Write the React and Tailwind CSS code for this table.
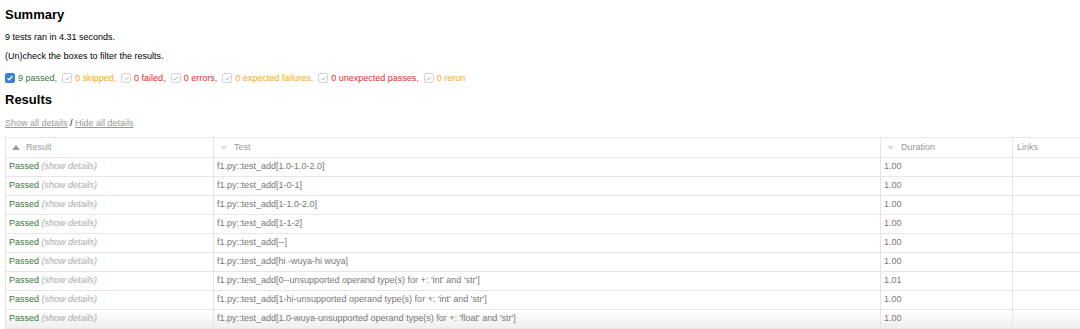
import React from "react";

const rows = [
  ["f1.py::test_add[1.0-1.0-2.0]", "1.00"],
  ["f1.py::test_add[1-0-1]", "1.00"],
  ["f1.py::test_add[1-1.0-2.0]", "1.00"],
  ["f1.py::test_add[1-1-2]", "1.00"],
  ["f1.py::test_add[--]", "1.00"],
  ["f1.py::test_add[hi -wuya-hi wuya]", "1.00"],
  ["f1.py::test_add[0--unsupported operand type(s) for +: 'int' and 'str']", "1.01"],
  ["f1.py::test_add[1-hi-unsupported operand type(s) for +: 'int' and 'str']", "1.00"],
  ["f1.py::test_add[1.0-wuya-unsupported operand type(s) for +: 'float' and 'str']", "1.00"],
];

const filters = [
  { label: "9 passed", color: "text-[#3c763d]", on: true },
  { label: "0 skipped", color: "text-[#f0a830]" },
  { label: "0 failed", color: "text-[#d9302c]" },
  { label: "0 errors", color: "text-[#d9302c]" },
  { label: "0 expected failures", color: "text-[#f0a830]" },
  { label: "0 unexpected passes", color: "text-[#d9302c]" },
  { label: "0 rerun", color: "text-[#f0a830]" },
];

function Box({ on }) {
  if (on) {
    return (
      <span className="inline-flex w-[10px] h-[10px] rounded-[2px] bg-[#3b7ddd] items-center justify-center mr-[3px]">
        <svg width="8" height="8" viewBox="0 0 8 8">
          <path d="M1.5 4.2 L3.2 5.8 L6.5 2" stroke="white" strokeWidth="1.3" fill="none" />
        </svg>
      </span>
    );
  }
  return (
    <span className="inline-flex w-[10px] h-[10px] rounded-[2px] border border-[#d4d4d4] bg-white items-center justify-center mr-[3px]">
      <svg width="7" height="7" viewBox="0 0 8 8">
        <path d="M1.5 4.2 L3.2 5.8 L6.5 2" stroke="#aaa" strokeWidth="1" fill="none" />
      </svg>
    </span>
  );
}

function Sort({ up }) {
  return up ? (
    <svg width="8" height="5" viewBox="0 0 8 5"><path d="M0 5 L4 0 L8 5 Z" fill="#999" /></svg>
  ) : (
    <svg width="7" height="4" viewBox="0 0 7 4"><path d="M0 0 L3.5 4 L7 0 Z" fill="#ddd" /></svg>
  );
}

export default function App() {
  return (
    <div className="bg-white text-black text-[9px] px-[5px] pt-[7px] overflow-hidden h-[329px]" style={{ fontFamily: "Helvetica, 'Liberation Sans', Arial, sans-serif" }}>
      <h2 className="text-[13px] font-bold leading-[16px]">Summary</h2>
      <p className="mt-[8px] leading-[12px]">9 tests ran in 4.31 seconds.</p>
      <p className="mt-[7px] leading-[12px]">(Un)check the boxes to filter the results.</p>
      <div className="mt-[10px] flex items-center leading-[12px]">
        {filters.map((f, i) => (
          <span key={i} className="flex items-center mr-[5px]">
            <Box on={f.on} />
            <span className={f.color}>{f.label}</span>
            {i < filters.length - 1 && <span className={f.color}>,</span>}
          </span>
        ))}
      </div>
      <h2 className="mt-[8px] text-[13px] font-bold leading-[16px]">Results</h2>
      <p className="mt-[9px] leading-[12px] text-[#999]">
        <span className="underline">Show all details</span>
        <span className="text-black"> / </span>
        <span className="underline">Hide all details</span>
      </p>
      <div className="mt-[8px] w-[1090px]">
        <table className="border-collapse w-full border border-[#e6e6e6] table-fixed">
          <colgroup>
            <col className="w-[208px]" />
            <col className="w-[667px]" />
            <col className="w-[132px]" />
            <col />
          </colgroup>
          <thead>
            <tr className="h-[20px] text-[#999] text-left">
              <th className="font-normal border border-[#e6e6e6] pl-[6px] align-middle">
                <div className="flex items-center gap-[6px]"><Sort up />Result</div>
              </th>
              <th className="font-normal border border-[#e6e6e6] pl-[6px] align-middle">
                <div className="flex items-center gap-[7px]"><Sort />Test</div>
              </th>
              <th className="font-normal border border-[#e6e6e6] pl-[6px] align-middle">
                <div className="flex items-center gap-[7px]"><Sort />Duration</div>
              </th>
              <th className="font-normal border border-[#e6e6e6] pl-[4px] align-middle">
                <div className="flex items-center">Links</div>
              </th>
            </tr>
          </thead>
          <tbody>
            {rows.map(([name, dur], i) => (
              <tr key={i} className={`h-[19px] ${i === rows.length - 1 ? "bg-gradient-to-b from-white to-[#eeeeee]" : ""}`}>
                <td className="border border-[#e6e6e6] pl-[3px]">
                  <span className="text-[#3c763d]">Passed</span>{" "}
                  <span className="italic text-[#aaa]">(show details)</span>
                </td>
                <td className="border border-[#e6e6e6] pl-[3px] text-[#777]">{name}</td>
                <td className="border border-[#e6e6e6] pl-[3px] text-[#777]">{dur}</td>
                <td className="border border-[#e6e6e6]"></td>
              </tr>
            ))}
          </tbody>
        </table>
      </div>
    </div>
  );
}
